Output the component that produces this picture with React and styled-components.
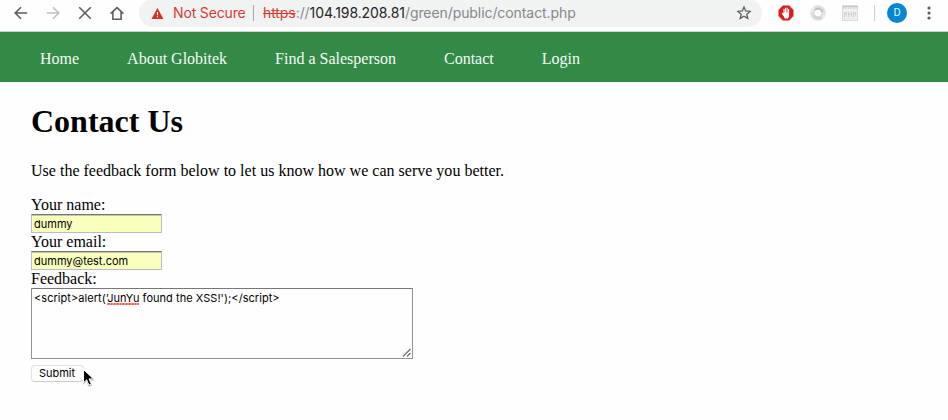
import React from "react";
import styled, { createGlobalStyle } from "styled-components";

const GlobalStyle = createGlobalStyle`
  *, *::before, *::after { box-sizing: border-box; }
  html, body { margin: 0; background: #fefefe; overflow: hidden; }
`;

const Page = styled.div`
  position: relative;
  width: 948px;
  height: 420px;
  overflow: hidden;
  background: #fefefe;
  color: #000;
  font: 16px/18px "Liberation Serif", "Times New Roman", serif;
`;

const Toolbar = styled.header`
  display: flex;
  align-items: flex-start;
  height: 32px;
  padding-left: 5px;
  background: #fefefe;
  border-bottom: 1px solid #cfd1d0;
`;

const Slot = styled.span`
  flex: none;
  display: flex;
  align-items: center;
  justify-content: center;
  width: ${(p) => p.$w || 32}px;
  height: 26px;
`;

const Icon = styled.svg`
  display: block;
  flex: none;
  width: ${(p) => p.$size || 16}px;
  height: ${(p) => p.$size || 16}px;
  fill: none;
  stroke: ${(p) => p.$color || "#5a5d62"};
  stroke-width: 1.6;
`;

const AddressBar = styled.div`
  flex: none;
  display: flex;
  align-items: center;
  width: 623px;
  height: 28px;
  margin: -1px 8px 0 6px;
  padding: 0 10px 0 12px;
  border-radius: 14px;
  background: #f1f3f3;
  font: 14px/28px Inter, sans-serif;
`;

const Warning = styled.span`
  flex: none;
  width: 72px;
  margin-left: 9px;
  color: #d93a30;
  letter-spacing: -0.15px;
  white-space: nowrap;
`;

const Divider = styled.span`
  flex: none;
  width: 1px;
  height: 16px;
  margin: ${(p) => p.$margin};
  background: ${(p) => p.$color};
`;

const Url = styled.span`
  flex: 1;
  color: #85888b;
  letter-spacing: -0.08px;
  white-space: nowrap;
`;

const Scheme = styled.s`
  color: #d93a30;
`;

const Host = styled.span`
  color: #222426;
`;

const Avatar = styled.span`
  width: 20px;
  height: 20px;
  border-radius: 50%;
  background: #0288d1;
  color: #e8f4fb;
  font: 11px/20px Roboto, sans-serif;
  text-align: center;
`;

const Nav = styled.nav`
  display: flex;
  gap: 48px;
  height: 50px;
  padding-left: 40px;
  background: #338a46;
`;

const NavLink = styled.a`
  color: #f6faf6;
  line-height: 53px;
  white-space: nowrap;
`;

const Main = styled.main`
  padding: 21px 31px 0;
`;

const Title = styled.h1`
  margin: 0;
  font-size: 32px;
  line-height: 37px;
`;

const Intro = styled.p`
  margin: 22px 0 16px;
  letter-spacing: 0.01px;
`;

const Form = styled.form`
  display: flex;
  flex-direction: column;
  align-items: flex-start;
`;

const Label = styled.label`
  height: 18px;
  line-height: 18px;
`;

const controlFont = `
  font-family: Inter, sans-serif;
  font-size: 11px;
  color: #000;
`;

const Field = styled.div`
  ${controlFont}
  width: 131px;
  height: 19px;
  padding: 0 2px;
  border: 1px solid #bcbcc8;
  border-top: 1px solid #777;
  box-shadow: inset 0 1px 0 #c4c6a6;
  background: #faffbd;
  line-height: 19px;
`;

const Feedback = styled.div`
  ${controlFont}
  display: flex;
  align-items: flex-start;
  justify-content: space-between;
  width: 382px;
  height: 71px;
  padding: 2px 0 0 2px;
  border: 1px solid #929292;
  border-top-color: #777;
  line-height: 15px;
  letter-spacing: 0.04px;
`;

const Misspelled = styled.span`
  background: radial-gradient(circle, #f5554c 1px, transparent 1.4px) left bottom / 3px 2px repeat-x;
`;

const Grip = styled(Icon)`
  align-self: flex-end;
`;

const Submit = styled.button`
  ${controlFont}
  width: 53px;
  height: 17px;
  margin: 6px 0 0;
  padding: 0 1px 0 0;
  border: 1px solid #e2e2e2;
  border-bottom-color: #cdcdcd;
  border-radius: 4px;
  background: #fff;
  line-height: 15px;
`;

const Pointer = styled.svg`
  position: absolute;
  left: 82px;
  top: 368px;
  width: 14px;
  height: 20px;
  filter: drop-shadow(0 1px 0.6px rgba(0, 0, 0, 0.35));
`;

const links = ["Home", "About Globitek", "Find a Salesperson", "Contact", "Login"];

export default function App() {
  return (
    <Page>
      <GlobalStyle />
      <Toolbar>
        <Slot><Icon viewBox="0 0 16 16"><path d="M14.2 8H2.4M8 2.2 2.2 8 8 13.8" /></Icon></Slot>
        <Slot><Icon viewBox="0 0 16 16" $color="#bfc0c2"><path d="M1.8 8h11.8M8 2.2 13.8 8 8 13.8" /></Icon></Slot>
        <Slot><Icon viewBox="0 0 16 16"><path d="m2.2 2.2 11.6 11.6M13.8 2.2 2.2 13.8" /></Icon></Slot>
        <Slot><Icon viewBox="0 0 16 16"><path d="M1.6 8.6 8 2.6l6.4 6M3.9 7v7.2h8.2V7" /></Icon></Slot>
        <AddressBar>
          <Icon viewBox="0 0 13 13" $size={13}>
            <path d="M6.5 1 12.5 12H.5Z" fill="#d93025" stroke="none" />
            <path d="M6.5 4.9v3.4M6.5 9.3v1.3" stroke="#fff" strokeWidth="1.2" />
          </Icon>
          <Warning>Not Secure</Warning>
          <Divider $margin="0 9px 0 8px" $color="#a4a6a9" />
          <Url><Scheme>https</Scheme>://<Host>104.198.208.81</Host>/green/public/contact.php</Url>
          <Icon viewBox="0 0 16 16" strokeLinejoin="miter">
            <path d="m8 2 1.7 4 4.4.4-3.3 2.9 1 4.2L8 11.3l-3.8 2.2 1-4.2-3.3-2.9 4.4-.4Z" strokeWidth="1.3" />
          </Icon>
        </AddressBar>
        <Slot>
          <Icon viewBox="0 0 16 16" stroke="none">
            <path d="M4.9.5h6.2l4.4 4.4v6.2l-4.4 4.4H4.9L.5 11.1V4.9Z" fill="#dc1c1c" stroke="#e88b87" strokeWidth=".5" />
            <path d="M6 9V4.3M7.5 8V3M9.1 8V3M10.6 8V4.4M4.4 8.4 6 10.4" stroke="#fff" strokeWidth="1.1" strokeLinecap="round" />
            <path d="m4.3 8.5 1.4.6V7.4h5.4v3.1c0 1.3-.7 2.2-1.2 2.9H6.8C6.1 11.8 4.9 10.3 4.3 8.5Z" fill="#fff" stroke="none" />
          </Icon>
        </Slot>
        <Slot>
          <Icon viewBox="0 0 16 16">
            <circle cx="8" cy="8" r="5.5" stroke="#dedede" strokeWidth="4.4" />
            <path d="M5 4.8c3-2.4 6.4-.9 7.4 2" stroke="#bebebe" strokeWidth="1.6" />
            <path d="M11.7 11.9c-3.1 2.2-6.6 1-7.7-2" stroke="#cccccc" strokeWidth="1.4" />
            <path d="M2 7.5c-.2-2 1-4 2.5-4.9M13.8 8c.4 2-.6 3.9-2 5" stroke="#efefef" strokeWidth="1.2" />
          </Icon>
        </Slot>
        <Slot>
          <Icon viewBox="0 0 16 16">
            <path d="M.5.5h15v15H.5Z" fill="#eeeeee" stroke="#dcdcdc" strokeWidth="1" />
            <path d="M0 1.5h16" stroke="#c9c9c9" strokeWidth="1" />
            <path d="M1 3h14" stroke="#d2d2d2" strokeWidth="1.4" strokeDasharray="1.5 1" />
            <path d="M1 5h14" stroke="#f6f6f6" strokeWidth="1" />
            <path d="M2.5 12V7.5h2V10h-2M6.5 7v5M9.5 7v5M6.5 9.5h3M11.5 12V7.5h2V10h-2" stroke="#d3d3d3" strokeWidth="1" />
          </Icon>
        </Slot>
        <Divider $margin="5px 12px 0 8px" $color="#cdcfd1" />
        <Slot $w={20}><Avatar>D</Avatar></Slot>
        <Slot $w={44}>
          <Icon viewBox="0 0 16 16">
            <path d="M8 3h.01M8 8h.01M8 13h.01" strokeWidth="3.2" strokeLinecap="round" />
          </Icon>
        </Slot>
      </Toolbar>
      <Nav>{links.map((text) => <NavLink key={text}>{text}</NavLink>)}</Nav>
      <Main>
        <Title>Contact Us</Title>
        <Intro>Use the feedback form below to let us know how we can serve you better.</Intro>
        <Form>
          <Label>Your name:</Label>
          <Field>dummy</Field>
          <Label>Your email:</Label>
          <Field>dummy@test.com</Field>
          <Label>Feedback:</Label>
          <Feedback>
            <span>{"<script>alert('"}<Misspelled>JunYu</Misspelled>{" found the XSS!');</script>"}</span>
            <Grip viewBox="0 0 10 10" $size={10} $color="#666">
              <path d="m1 8.5 7.5-7.5M5 8.5 8.5 5" strokeWidth="1.1" />
            </Grip>
          </Feedback>
          <Submit type="button">Submit</Submit>
        </Form>
      </Main>
      <Pointer viewBox="0 0 14 20">
        <path d="M1.5 1.5v13.3l3.2-3 2.2 5.4 2.5-1-2.3-5.3h4.4Z" fill="#000" stroke="#fff" strokeWidth="1" />
      </Pointer>
    </Page>
  );
}
